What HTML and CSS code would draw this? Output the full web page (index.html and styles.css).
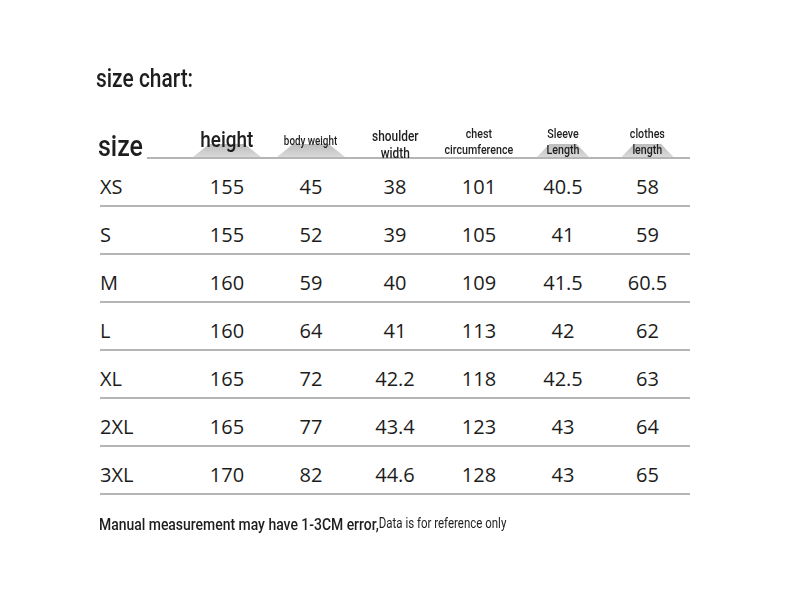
FILE: index.html
```html
<!DOCTYPE html>
<html>
<head>
<meta charset="utf-8">
<link rel="stylesheet" href="styles.css">
</head>
<body>
<div class="page">
  <h1 class="title"><span class="cond">size chart:</span></h1>
  <div class="chart">
    <div class="head">
      <div class="hc size-h"><span class="cond">size</span></div>
      <div class="hc hump h-height"><span class="cond">height</span></div>
      <div class="hc hump h-bw"><span class="cond">body weight</span></div>
      <div class="hc h-two h-sh"><span class="cond">shoulder<br>width</span></div>
      <div class="hc h-two h-chest"><span class="cond">chest<br>circumference</span></div>
      <div class="hc hump h-two h-sl"><span class="cond">Sleeve<br>Length</span></div>
      <div class="hc hump h-two h-cl"><span class="cond">clothes<br>length</span></div>
    </div>
    <div class="row"><span class="sz">XS</span><span>155</span><span>45</span><span>38</span><span>101</span><span>40.5</span><span>58</span></div>
    <div class="row"><span class="sz">S</span><span>155</span><span>52</span><span>39</span><span>105</span><span>41</span><span>59</span></div>
    <div class="row"><span class="sz">M</span><span>160</span><span>59</span><span>40</span><span>109</span><span>41.5</span><span>60.5</span></div>
    <div class="row"><span class="sz">L</span><span>160</span><span>64</span><span>41</span><span>113</span><span>42</span><span>62</span></div>
    <div class="row"><span class="sz">XL</span><span>165</span><span>72</span><span>42.2</span><span>118</span><span>42.5</span><span>63</span></div>
    <div class="row"><span class="sz">2XL</span><span>165</span><span>77</span><span>43.4</span><span>123</span><span>43</span><span>64</span></div>
    <div class="row"><span class="sz">3XL</span><span>170</span><span>82</span><span>44.6</span><span>128</span><span>43</span><span>65</span></div>
  </div>
  <p class="note"><span class="cond"><span class="n1">Manual measurement may have 1-3CM error,</span><span class="n2">Data is for reference only</span></span></p>
</div>
</body>
</html>
```
FILE: styles.css
```css
html, body {
  margin: 0;
  padding: 0;
  background: #fff;
}
.page {
  padding: 63px 0 0 96px;
  font-family: Roboto, "Liberation Sans", sans-serif;
  color: #1e1e1e;
}
.cond {
  display: inline-block;
  transform: scaleX(0.8);
  transform-origin: left center;
  white-space: nowrap;
}
.title {
  margin: 0;
  font-size: 26px;
  line-height: 30px;
  font-weight: 500;
}
.title .cond {
  transform: scaleX(0.805);
}
.chart {
  margin: 22px 0 0 4px;
  width: 590px;
}
.head {
  display: grid;
  grid-template-columns: 85px repeat(5, 84px) 85px;
  height: 44px;
  background: linear-gradient(#b5b5b5, #b5b5b5) no-repeat 47px 100% / calc(100% - 47px) 2px;
  font-weight: 500;
}
.hc {
  display: grid;
  align-items: end;
  justify-items: center;
  text-align: center;
}
.hc > .cond {
  grid-area: 1 / 1;
  transform-origin: center bottom;
  z-index: 1;
}
.hump::before {
  content: "";
  grid-area: 1 / 1;
  align-self: end;
  width: 68px;
  height: 13px;
  margin-bottom: 2px;
  background: linear-gradient(#bcbcbc, #dadada);
  clip-path: polygon(24% 0, 76% 0, 100% 100%, 0 100%);
  filter: blur(0.7px);
}
.size-h {
  justify-items: start;
}
.size-h .cond {
  font-size: 29px;
  line-height: 29px;
  margin: 0 0 -2px -2px;
  transform: scaleX(0.86);
  transform-origin: left bottom;
}
.h-height .cond {
  font-size: 22px;
  line-height: 22px;
  margin-bottom: 8px;
  transform: scaleX(0.86);
}
.h-bw .cond {
  font-size: 12px;
  line-height: 14px;
  margin-bottom: 11px;
  transform: scaleX(0.82);
}
.h-two .cond {
  font-size: 13px;
  line-height: 16px;
  margin-bottom: 1px;
  transform: scaleX(0.82);
}
.h-sh .cond {
  font-size: 14px;
  line-height: 17px;
  margin-bottom: -3px;
  transform: scaleX(0.85);
}
.h-sl::before, .h-cl::before {
  width: 52px;
}
.row {
  display: grid;
  grid-template-columns: 85px repeat(5, 84px) 85px;
  height: 46px;
  border-bottom: 2px solid #b5b5b5;
  font-family: "Open Sans", "Noto Sans", sans-serif;
  font-size: 20px;
  line-height: 27px;
  color: #1c1c1c;
}
.row span {
  padding-top: 14px;
  text-align: center;
}
.row .sz {
  text-align: left;
}
.note {
  margin: 19px 0 0 3px;
  font-weight: 500;
  white-space: nowrap;
}
.note .cond {
  transform: scaleX(0.82);
}
.n1 {
  font-size: 17px;
}
.n2 {
  font-size: 14px;
  font-weight: 400;
  position: relative;
  top: -2px;
}
```
